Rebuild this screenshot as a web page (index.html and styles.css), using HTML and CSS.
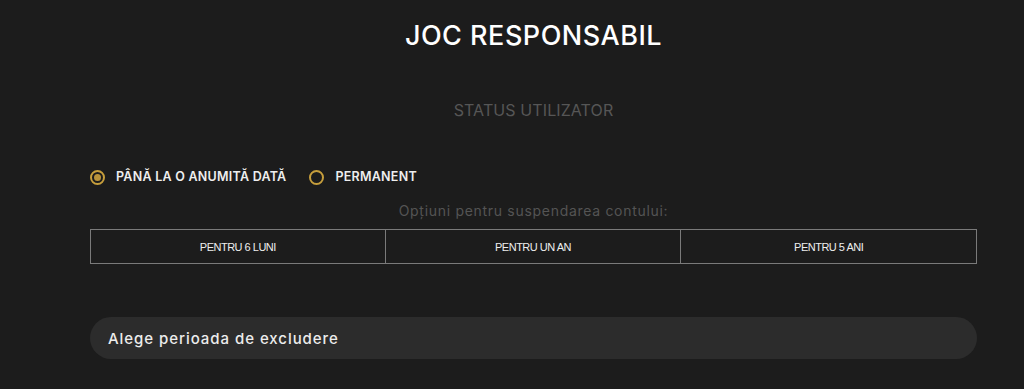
FILE: index.html
```html
<!DOCTYPE html>
<html lang="ro">
<head>
<meta charset="utf-8">
<title>Joc responsabil</title>
<link rel="stylesheet" href="styles.css">
</head>
<body>
<main class="page">
  <h1 class="title">JOC RESPONSABIL</h1>
  <h2 class="subtitle">STATUS UTILIZATOR</h2>
  <div class="radios">
    <label class="radio"><span class="dot checked"></span><span class="radio-label">PÂNĂ LA O ANUMITĂ DATĂ</span></label>
    <label class="radio"><span class="dot"></span><span class="radio-label">PERMANENT</span></label>
  </div>
  <p class="options-title">Opțiuni pentru suspendarea contului:</p>
  <div class="periods">
    <button class="period">PENTRU 6 LUNI</button>
    <button class="period">PENTRU UN AN</button>
    <button class="period">PENTRU 5 ANI</button>
  </div>
  <div class="select">Alege perioada de excludere</div>
</main>
</body>
</html>
```

FILE: styles.css
```css
html, body {
  margin: 0;
  padding: 0;
  background: #1c1c1c;
  height: 100%;
}
body {
  font-family: Inter, "Noto Sans", sans-serif;
  color: #fff;
}
.page {
  width: 887px;
  margin-left: 90px;
  display: flex;
  flex-direction: column;
  padding-top: 20px;
}
.title {
  margin: 0;
  text-align: center;
  font-size: 27px;
  font-weight: 500;
  letter-spacing: 0.5px;
  line-height: 32px;
  color: #fff;
}
.subtitle {
  margin: 48px 0 0;
  text-align: center;
  font-size: 16px;
  font-weight: 400;
  line-height: 20px;
  color: #565656;
  letter-spacing: 0.1px;
}
.radios {
  display: flex;
  gap: 23px;
  margin-top: 49px;
  align-items: center;
}
.radio {
  display: flex;
  align-items: center;
  gap: 11px;
}
.dot {
  width: 15px;
  height: 15px;
  box-sizing: border-box;
  border: 2px solid #c69e3c;
  border-radius: 50%;
  display: flex;
  align-items: center;
  justify-content: center;
}
.dot.checked::after {
  content: "";
  width: 7px;
  height: 7px;
  border-radius: 50%;
  background: #b8923a;
}
.radio-label {
  font-size: 12.5px;
  font-weight: 600;
  color: #eee;
  line-height: 16px;
  letter-spacing: 0.25px;
}
.options-title {
  margin: 16px 0 0;
  text-align: center;
  font-size: 14px;
  line-height: 20px;
  color: #545454;
  letter-spacing: 0.7px;
}
.periods {
  display: grid;
  grid-template-columns: repeat(3, 1fr);
  margin-top: 8px;
}
.period {
  height: 35px;
  background: transparent;
  border: 1px solid #7a7a7a;
  color: #eee;
  font-family: "Liberation Sans", Arial, sans-serif;
  font-size: 11px;
  letter-spacing: -0.5px;
  padding: 0;
}
.period + .period {
  border-left: none;
}
.select {
  margin-top: 53px;
  height: 42px;
  border-radius: 21px;
  background: #2c2c2c;
  display: flex;
  align-items: center;
  padding-left: 18px;
  font-size: 15px;
  font-weight: 500;
  color: #ececec;
  letter-spacing: 0.95px;
}
```
